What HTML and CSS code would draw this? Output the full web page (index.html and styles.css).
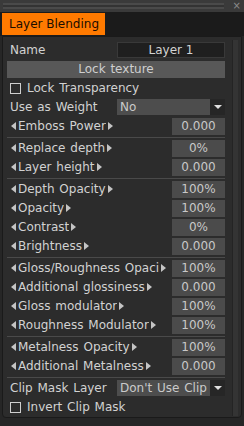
FILE: index.html
```html
<!DOCTYPE html>
<html>
<head>
<meta charset="utf-8">
<link rel="stylesheet" href="styles.css">
</head>
<body>
<div class="win">
  <div class="titlebar"><div class="grip"></div><span class="close">×</span></div>
  <div class="tabbar"><div class="tab">Layer Blending</div></div>
  <div class="panel">
    <div class="content">
      <div class="row name-row"><span class="lbl">Name</span><div class="field">Layer 1</div></div>
      <div class="btn">Lock texture</div>
      <div class="check-row"><span class="box"></span><span class="lbl">Lock Transparency</span></div>
      <div class="row sel-row"><span class="lbl">Use as Weight</span><div class="select"><span class="sel-val">No</span><span class="sel-arrow"></span></div></div>
      <div class="slider"><span class="al"></span><span class="sl-lbl">Emboss Power</span><span class="ar"></span><span class="val">0.000</span></div>
      <div class="sep"></div>
      <div class="slider"><span class="al"></span><span class="sl-lbl">Replace depth</span><span class="ar"></span><span class="val">0%</span></div>
      <div class="slider"><span class="al"></span><span class="sl-lbl">Layer height</span><span class="ar"></span><span class="val">0.000</span></div>
      <div class="sep"></div>
      <div class="slider"><span class="al"></span><span class="sl-lbl">Depth Opacity</span><span class="ar"></span><span class="val">100%</span></div>
      <div class="slider"><span class="al"></span><span class="sl-lbl">Opacity</span><span class="ar"></span><span class="val">100%</span></div>
      <div class="slider"><span class="al"></span><span class="sl-lbl">Contrast</span><span class="ar"></span><span class="val">0%</span></div>
      <div class="slider"><span class="al"></span><span class="sl-lbl">Brightness</span><span class="ar"></span><span class="val">0.000</span></div>
      <div class="sep"></div>
      <div class="slider"><span class="al"></span><span class="sl-lbl">Gloss/Roughness Opaci</span><span class="ar"></span><span class="val">100%</span></div>
      <div class="slider"><span class="al"></span><span class="sl-lbl">Additional glossiness</span><span class="ar"></span><span class="val">0.000</span></div>
      <div class="slider"><span class="al"></span><span class="sl-lbl">Gloss modulator</span><span class="ar"></span><span class="val">100%</span></div>
      <div class="slider"><span class="al"></span><span class="sl-lbl">Roughness Modulator</span><span class="ar"></span><span class="val">100%</span></div>
      <div class="sep"></div>
      <div class="slider"><span class="al"></span><span class="sl-lbl">Metalness Opacity</span><span class="ar"></span><span class="val">100%</span></div>
      <div class="slider"><span class="al"></span><span class="sl-lbl">Additional Metalness</span><span class="ar"></span><span class="val">0.000</span></div>
      <div class="sep"></div>
      <div class="row clip-row"><span class="lbl">Clip Mask Layer</span><div class="select"><span class="sel-val">Don't Use Clip</span><span class="sel-arrow"></span></div></div>
      <div class="check-row invert"><span class="box"></span><span class="lbl">Invert Clip Mask</span></div>
    </div>
    <div class="scroll"></div>
  </div>
</div>
</body>
</html>
```

FILE: styles.css
```css
* { box-sizing: border-box; }
html, body {
  margin: 0;
  padding: 0;
  background: #262626;
}
body {
  width: 244px;
  height: 426px;
  overflow: hidden;
  font-family: "DejaVu Sans", sans-serif;
  font-size: 12px;
  color: #d2d2d2;
}
.win {
  width: 244px;
  height: 426px;
  display: flex;
  flex-direction: column;
}
.titlebar {
  height: 12px;
  background: #3a3a3a;
  display: flex;
  align-items: center;
  padding: 0 3px;
}
.grip {
  width: 222px;
  height: 6px;
  border-top: 2px solid #4a4a4a;
  border-bottom: 2px solid #4a4a4a;
  background: #333;
}
.close {
  margin-left: 9px;
  font-size: 10px;
  line-height: 10px;
  color: #8a8a8a;
}
.tabbar {
  height: 24px;
  background: #1b1b1b;
  padding: 1px 0 0 2px;
}
.tab {
  width: 103px;
  height: 22px;
  background: #ff7a00;
  color: #1a0d00;
  padding-left: 7px;
  line-height: 22px;
}
.panel {
  width: 240px;
  height: 382px;
  margin-left: 2px;
  background: #2c2c2c;
  border: 1px solid #1a1a1a;
  border-radius: 0 0 4px 4px;
  display: flex;
}
.content {
  width: 222px;
  padding: 5px 0 0 4px;
  display: flex;
  flex-direction: column;
}
.scroll {
  margin: 3px 0 1px 7px;
  width: 6px;
  background: #343434;
  border-left: 1px solid #242424;
}
.row {
  display: flex;
  align-items: center;
  white-space: nowrap;
}
.lbl {
  padding-left: 3px;
  word-spacing: 1px;
}
.name-row {
  height: 16px;
  justify-content: space-between;
}
.field {
  width: 108px;
  height: 16px;
  background: #1f1f1f;
  border: 1px solid #393939;
  text-align: center;
  line-height: 14px;
}
.btn {
  margin-top: 3px;
  height: 17px;
  background: #585858;
  text-align: center;
  line-height: 17px;
  color: #cfcfcf;
  word-spacing: 1px;
}
.check-row {
  height: 21px;
  display: flex;
  align-items: center;
  white-space: nowrap;
}
.box {
  width: 11px;
  height: 11px;
  margin-left: 3px;
  margin-right: 4px;
  border: 1px solid #cfcfcf;
}
.check-row .lbl { padding-left: 2px; }
.sel-row {
  height: 16px;
  margin-bottom: 3px;
}
.select {
  margin-left: auto;
  width: 108px;
  height: 16px;
  display: flex;
}
.sel-val {
  flex: 1;
  background: #4d4d4d;
  color: #cacaca;
  padding-left: 3px;
  line-height: 16px;
  word-spacing: 1px;
}
.sel-arrow {
  width: 15px;
  background: #262626;
  position: relative;
}
.sel-arrow::after {
  content: "";
  position: absolute;
  left: 4px;
  top: 6px;
  border-left: 4px solid transparent;
  border-right: 4px solid transparent;
  border-top: 4px solid #e0e0e0;
}
.slider {
  height: 17px;
  margin-bottom: 2px;
  display: flex;
  align-items: center;
  white-space: nowrap;
}
.al, .ar {
  flex: none;
  width: 0;
  height: 0;
  border-top: 4px solid transparent;
  border-bottom: 4px solid transparent;
}
.al {
  margin-left: 4px;
  border-right: 5px solid #c4c4c4;
}
.ar {
  margin-left: 2px;
  border-left: 5px solid #c4c4c4;
}
.sl-lbl {
  padding-left: 2px;
  overflow: hidden;
  word-spacing: 1px;
}
.val {
  flex: none;
  margin-left: auto;
  width: 53px;
  height: 17px;
  background: #4b4b4b;
  color: #c8c8c8;
  text-align: center;
  line-height: 17px;
}
.sep {
  height: 1px;
  background: #4a4a4a;
  margin-bottom: 2px;
}
.clip-row {
  height: 17px;
}
.invert {
  height: 20px;
  margin-top: 1px;
}
```
